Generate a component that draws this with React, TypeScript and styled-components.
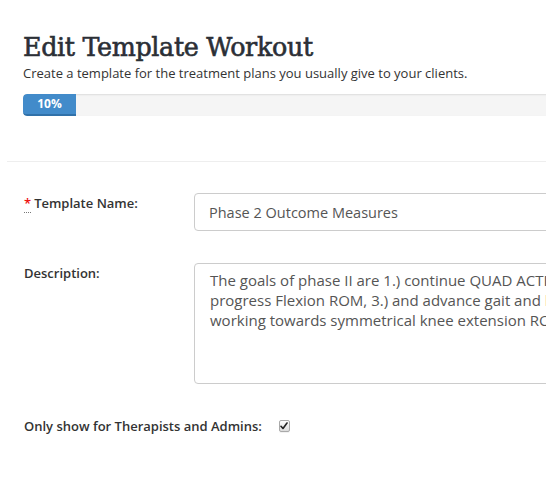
import React from "react";
import styled, { createGlobalStyle } from "styled-components";

const Global = createGlobalStyle`
  html, body { margin: 0; padding: 0; background: #fff; overflow: hidden; }
  body { font-family: "Open Sans", "Noto Sans", sans-serif; color: #333; }
  * { box-sizing: border-box; }
`;

const Page = styled.div`
  width: 546px;
  height: 483px;
  overflow: hidden;
  padding-top: 30px;
`;

const Header = styled.header`
  padding-left: 23px;
`;

const Title = styled.h1`
  margin: 0;
  font-family: "DejaVu Serif", serif;
  font-weight: 400;
  font-size: 25.4px;
  line-height: 34px;
  color: #2b2f36;
  -webkit-text-stroke: 0.6px #2b2f36;
  letter-spacing: -0.35px;
`;

const Subtitle = styled.p`
  margin: 0;
  font-size: 13px;
  line-height: 18px;
  color: #333;
`;

const Progress = styled.div`
  margin-top: 12px;
  width: 560px;
  height: 22px;
  background: #f5f5f5;
  border-radius: 4px 0 0 4px;
  box-shadow: inset 0 1px 2px rgba(0, 0, 0, 0.1);
  display: flex;
  overflow: hidden;
`;

const Bar = styled.div`
  height: 100%;
  background: #428bca;
  border-bottom: 2px solid #3071a9;
  color: #fff;
  font-weight: 700;
  font-size: 12px;
  line-height: 20px;
  text-align: center;
  border-radius: 4px 0 0 4px;
`;

const Rule = styled.hr`
  margin: 45px 0 0 7px;
  border: 0;
  border-top: 1px solid #eee;
`;

const Form = styled.form`
  padding: 31px 0 0 24px;
  display: grid;
  grid-template-columns: 170px 1fr;
  row-gap: 32px;
  align-items: start;
`;

const Label = styled.label`
  font-weight: 600;
  font-size: 13px;
  line-height: 18px;
  color: #333;
  padding-top: 1px;
`;

const Required = styled.abbr`
  color: #e11;
  text-decoration: none;
  border-bottom: 1px dotted #777;
  margin-right: 3px;
  cursor: help;
`;

const Field = styled.input`
  width: 420px;
  height: 38px;
  padding: 0 14px;
  border: 1px solid #ccc;
  border-radius: 4px;
  font-family: "Open Sans", sans-serif;
  font-size: 14.5px;
  color: #555;
  outline: none;
`;

const Area = styled.textarea`
  width: 420px;
  height: 121px;
  padding: 6px 15px;
  border: 1px solid #ccc;
  border-radius: 4px;
  font-family: "Open Sans", sans-serif;
  font-size: 15px;
  line-height: 20px;
  color: #555;
  resize: none;
  overflow: hidden;
  white-space: pre;
  outline: none;
`;

const CheckRow = styled.div`
  grid-column: 1 / -1;
  display: flex;
  align-items: center;
  gap: 17px;
`;

const CheckBox = styled.span`
  width: 11px;
  height: 12px;
  border: 1px solid #a9a9a9;
  border-radius: 2px;
  background: linear-gradient(#fdfdfd, #dcdcdc);
  display: inline-flex;
  align-items: center;
  justify-content: center;
  box-shadow: 0 1px 0 rgba(0, 0, 0, 0.05);
`;

const description =
  "The goals of phase II are 1.) continue QUAD ACTIVATION, 2.)\nprogress Flexion ROM, 3.) and advance gait and balance,\nworking towards symmetrical knee extension ROM.";

export default function App() {
  return (
    <Page>
      <Global />
      <Header>
        <Title>Edit Template Workout</Title>
        <Subtitle>Create a template for the treatment plans you usually give to your clients.</Subtitle>
        <Progress>
          <Bar style={{ width: "53px" }}>10%</Bar>
        </Progress>
      </Header>
      <Rule />
      <Form>
        <Label htmlFor="name">
          <Required title="required">*</Required>Template Name:
        </Label>
        <Field id="name" defaultValue="Phase 2 Outcome Measures" />
        <Label htmlFor="desc">Description:</Label>
        <Area id="desc" defaultValue={description} wrap="off" />
        <CheckRow>
          <Label>Only show for Therapists and Admins:</Label>
          <CheckBox role="checkbox" aria-checked="true">
            <svg width="8" height="8" viewBox="0 0 8 8">
              <path d="M1 4.3 L3 6.5 L7 1" fill="none" stroke="#222" strokeWidth="1.6" strokeLinecap="round" strokeLinejoin="round" />
            </svg>
          </CheckBox>
        </CheckRow>
      </Form>
    </Page>
  );
}
